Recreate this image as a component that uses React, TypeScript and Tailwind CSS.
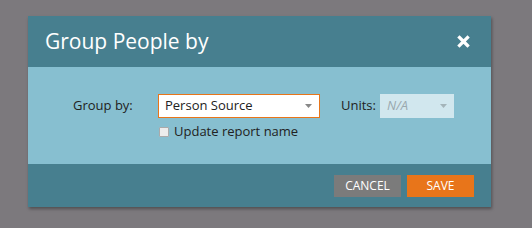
export default function App() {
  return (
    <div
      className="flex h-[228px] w-[532px] items-start bg-[#7c797d] pl-[28px] pt-[16px]"
      style={{ fontFamily: '"Open Sans", "Liberation Sans", sans-serif' }}
    >
      <div className="flex w-[463px] flex-col shadow-[1px_2px_3px_rgba(0,0,0,0.35)]">
        {/* header */}
        <div className="flex h-[51px] items-center justify-between bg-[#477f8f] pl-[17px] pr-[21px]">
          <span className="text-[21px] leading-none text-white">Group People by</span>
          <svg width="13" height="13" viewBox="0 0 13 13">
            <path d="M2.5 2.5 L10.5 10.5 M10.5 2.5 L2.5 10.5" stroke="white" strokeWidth="3.2" strokeLinecap="square" />
          </svg>
        </div>

        {/* body */}
        <div className="flex h-[97px] flex-col bg-[#87bfd0] pt-[27px]">
          <div className="flex items-center">
            <span className="ml-[45px] w-[85px] text-[13px] text-[#222]">Group by:</span>
            <div className="flex h-[24px] w-[162px] items-center justify-between border border-[#e8751a] bg-white pl-[6px] pr-[7px]">
              <span className="text-[13px] text-[#222]">Person Source</span>
              <svg width="7" height="4" viewBox="0 0 7 4">
                <path d="M0 0 L7 0 L3.5 4 Z" fill="#888" />
              </svg>
            </div>
            <span className="ml-[21px] text-[13px] text-[#222]">Units:</span>
            <div className="ml-[4px] flex h-[24px] w-[74px] items-center justify-between bg-[#d1e7ee] pl-[7px] pr-[7px]">
              <span className="text-[13px] italic text-[#9aa9ae]">N/A</span>
              <svg width="7" height="4" viewBox="0 0 7 4">
                <path d="M0 0 L7 0 L3.5 4 Z" fill="#a4b4b9" />
              </svg>
            </div>
          </div>
          <div className="ml-[131px] mt-[7px] flex items-center">
            <span className="h-[10px] w-[10px] rounded-[1px] border border-[#aaa] bg-[#ececec]" />
            <span className="ml-[5px] text-[13px] leading-none text-[#222]">Update report name</span>
          </div>
        </div>

        {/* footer */}
        <div className="flex h-[43px] items-center justify-end gap-[6px] bg-[#477f8f] pr-[17px]">
          <button className="flex h-[22px] w-[67px] items-center justify-center bg-[#7b7b7b] text-[12px] text-white">
            CANCEL
          </button>
          <button className="flex h-[22px] w-[67px] items-center justify-center bg-[#e8751a] text-[12px] text-white">
            SAVE
          </button>
        </div>
      </div>
    </div>
  );
}
